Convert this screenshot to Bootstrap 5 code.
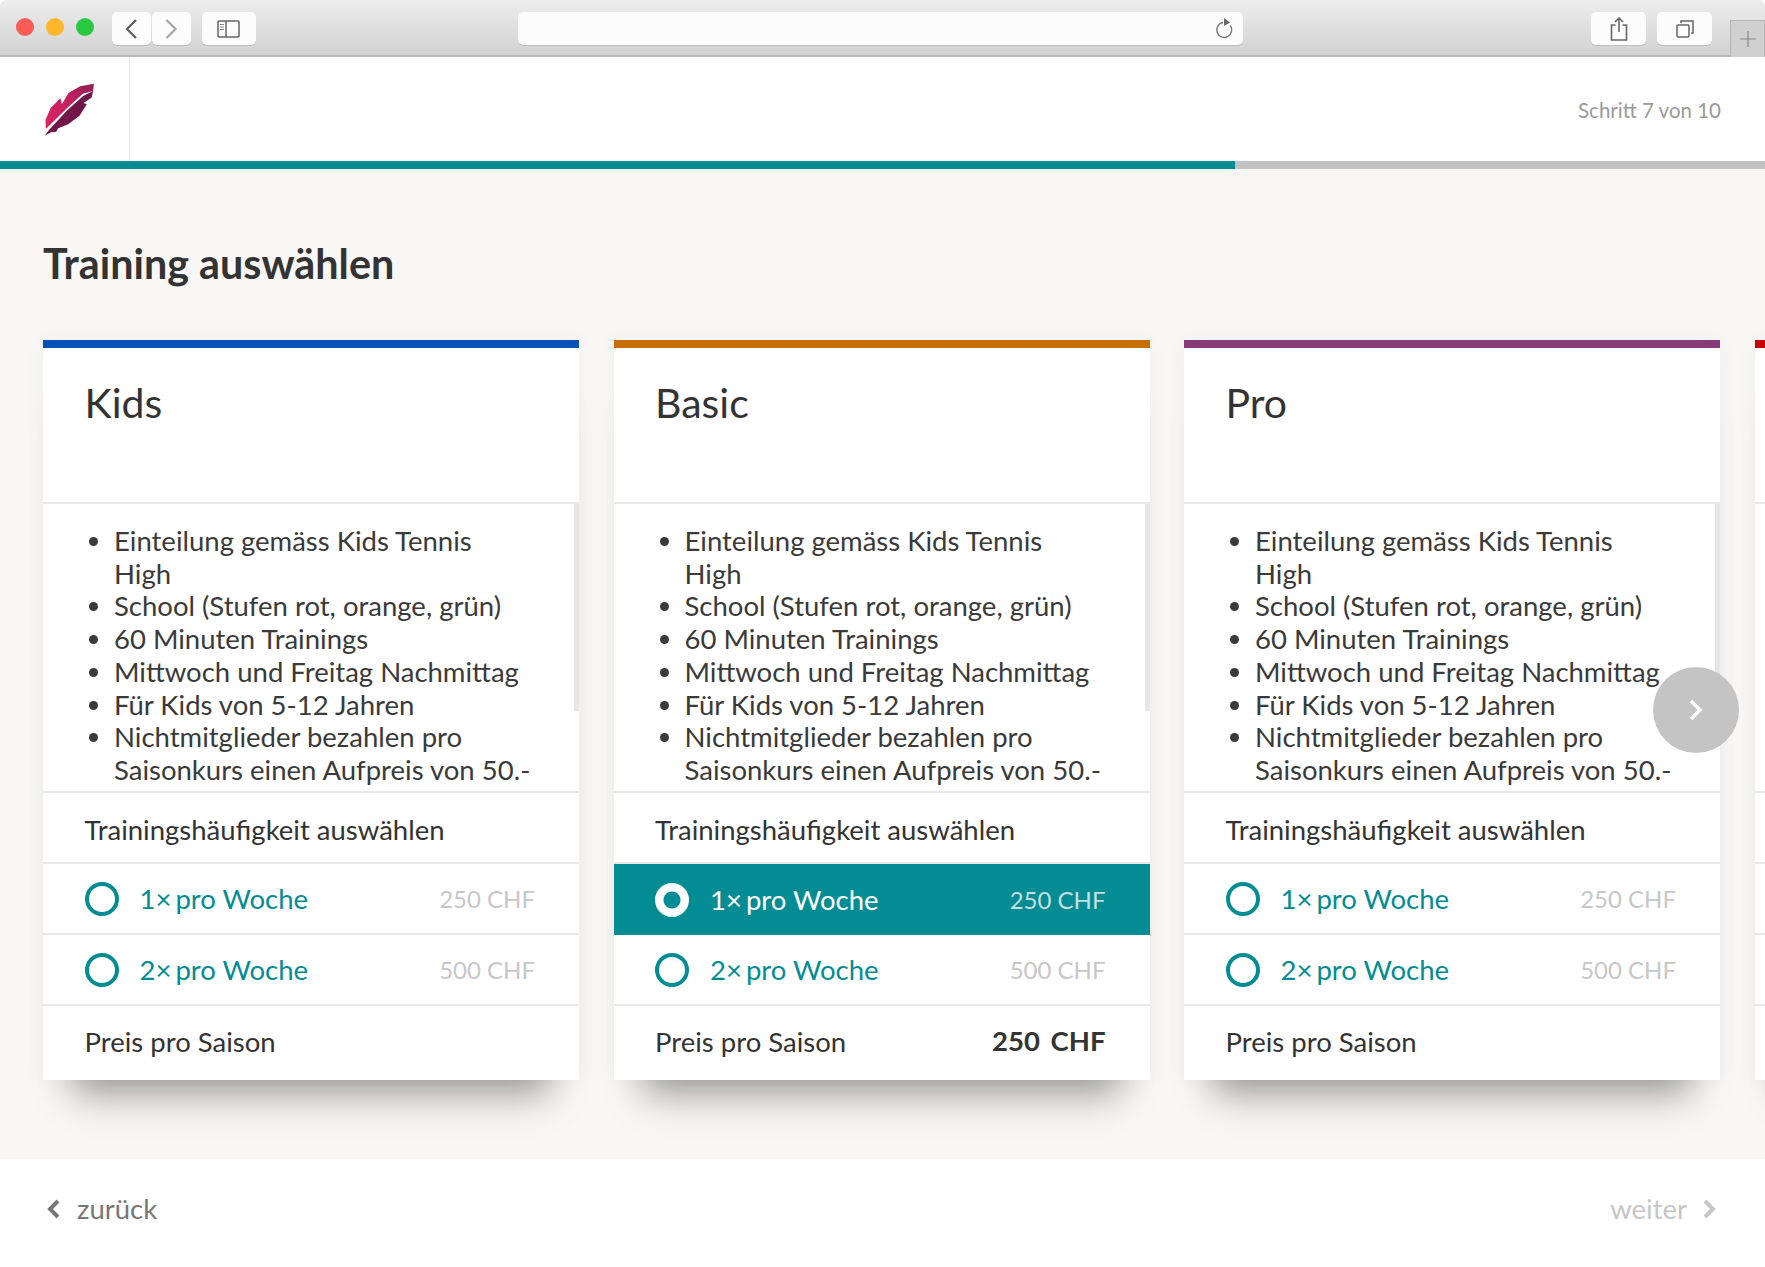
<!DOCTYPE html>
<html lang="de">
<head>
<meta charset="utf-8">
<title>Training auswählen</title>
<link rel="stylesheet" href="https://cdn.jsdelivr.net/npm/bootstrap@5.3.0/dist/css/bootstrap.min.css">
<style>
html,body{height:1267px;overflow:hidden;background:#fff}
body{font-family:Lato,"Open Sans",sans-serif;color:#333}
.browser-bar{height:57px;background:linear-gradient(#ededed,#d2d2d2);border-bottom:2px solid #b9b9b9;border-radius:6px 6px 0 0;padding:12px 0 0 16px;position:relative}
.light{width:18px;height:18px;border-radius:50%;margin-top:6px;margin-right:12px}
.light-r{background:#fc5b57}.light-y{background:#fdb82c}.light-g{background:#2ac840;margin-right:18px}
.tool{height:33px;background:#fcfcfc;border-radius:5px;box-shadow:0 1px 0 #bdbdbd;display:flex;align-items:center;justify-content:center}
.tool-nav{width:39px;margin-right:1px}
.tool-side{width:54px;margin-left:10px}
.tool-addr{width:726px;margin-left:262px;justify-content:flex-end;padding-right:8px}
.tool-share{width:55px;margin-left:348px}
.tool-tabs{width:55px;margin-left:11px}
.new-tab{width:35px;height:37px;margin-left:18px;margin-top:8px;background:#d0d0d0;border:1px solid #b5b5b5;border-bottom:0;display:flex;align-items:center;justify-content:center}
.app-head{height:104px;background:#fff}
.logo-cell{width:130px;border-right:1px solid #ececec;padding-left:9px}
.step-text{font-size:20.5px;color:#9a9a9a;padding:2px 44px 0 0}
.prog-track{height:8px;background:#c3c3c3}
.prog-fill{width:1235px;height:8px;background:#038c93}
.page-main{height:990px;background:#f8f7f6;padding:0 0 0 43px;overflow:hidden;position:relative}
.page-title{font-size:41.3px;font-weight:700;color:#333;margin:0;padding-top:70px;height:171px;line-height:48px}
.plans{gap:34.5px}
.plan{width:536px;flex:0 0 536px;border:0;border-radius:0;background:#fff;box-shadow:0 0 20px rgba(0,0,0,.035),0 44px 36px -30px rgba(0,0,0,.38)}
.plan-blue{border-top:8px solid #0650b8}
.plan-orange{border-top:8px solid #c46f08}
.plan-purple{border-top:8px solid #843d78}
.plan-red{border-top:8px solid #c90000}
.plan-name{height:156px;padding:31px 42px 0 41.500px;font-size:41px;font-weight:400;line-height:48px;border-bottom:2px solid #e8e8e8;margin:0;color:#333}
.plan-desc{height:289px;border-bottom:2px solid #e8e8e8;overflow:hidden}
.plan-desc ul{margin:0;padding:21px 8px 0 71px;font-size:27.500px;line-height:32.700px;flex:1;color:#3a3a3a}
.scroll-thumb{width:5px;height:207px;background:#e6e6e6;flex:none}
.row-freq,.row-opt,.row-total{padding:0 44px 0 41.500px;font-size:27.500px}
.row-freq{height:71px;border-bottom:2px solid #e8e8e8;color:#333;padding-top:4px}
.row-opt{height:71px;color:#038c93;gap:21px;border-bottom:2px solid #e8e8e8;margin:0}
.row-opt-on{background:#038c93;color:#fff;border-bottom:0}
.row-opt-on .opt-price{color:#c6dfe0}
.opt-price{font-size:24px;color:#c7c7c7}
.opt-x{margin-right:-3px}
.row-total{height:74px;color:#333;padding-bottom:2px}
.total-sum{font-size:27.500px;font-weight:700;word-spacing:4px;line-height:1;margin-top:-2px}
.opt-radio.form-check-input{width:34px;height:34px;margin:0;flex:none;background:#fff;border:4px solid #038c93;box-shadow:none}
.opt-radio.form-check-input:checked{background:#fff;background-image:radial-gradient(circle,#038c93 0 8px,#fff 9px);border-color:#fff}
.carousel-next{position:absolute;left:1653px;top:498px;width:86px;height:86px;border-radius:50%;background:#c4c4c4;display:flex;align-items:center;justify-content:center}
.app-foot{height:108px;background:#fff;padding:0 48px 8px 46px;font-size:27.500px}
.foot-back{color:#777;gap:17px}
.foot-next{color:#c6c6c6;gap:16px}
</style>
</head>
<body>
<div class="browser-bar d-flex align-items-start">
  <span class="light light-r"></span><span class="light light-y"></span><span class="light light-g"></span>
  <div class="tool tool-nav"><svg width="14" height="22" viewBox="0 0 14 22"><path d="M12 2 3 11l9 9" fill="none" stroke="#5c5c5c" stroke-width="2.200"/></svg></div>
  <div class="tool tool-nav"><svg width="14" height="22" viewBox="0 0 14 22"><path d="M2.500 2l9 9-9 9" fill="none" stroke="#a6a6a6" stroke-width="2.200"/></svg></div>
  <div class="tool tool-side"><svg width="23" height="18" viewBox="0 0 23 18"><rect x="1" y="1" width="21" height="16" rx="1" fill="none" stroke="#666" stroke-width="1.500"/><path d="M9 1v16" stroke="#666" stroke-width="1.500"/><path d="M3 4.500h4M3 7h4M3 9.500h4" stroke="#888"/></svg></div>
  <div class="tool tool-addr"><svg width="20" height="23" viewBox="0 0 20 23"><path d="M8 5.500a7.500 7.500 0 1 0 7.300 3" fill="none" stroke="#777" stroke-width="1.400"/><path d="M9 1l6 4.500-6 3.500z" fill="#666"/></svg></div>
  <div class="tool tool-share"><svg width="18" height="24" viewBox="0 0 18 24"><path d="M5.500 8H1.500v15h15V8h-4M9 15V1.500M5 5l4-4 4 4" fill="none" stroke="#666" stroke-width="1.600"/></svg></div>
  <div class="tool tool-tabs"><svg width="18" height="18" viewBox="0 0 18 18"><rect x="1" y="5" width="12" height="12" rx="1" fill="none" stroke="#666" stroke-width="1.500"/><path d="M5 3V1h12v12h-2" fill="none" stroke="#666" stroke-width="1.500"/></svg></div>
  <div class="new-tab"><svg width="16" height="16" viewBox="0 0 16 16"><path d="M8 0v16M0 8h16" stroke="#8b8b8b" stroke-width="1.200"/></svg></div>
</div>

<header class="app-head d-flex align-items-stretch justify-content-between">
  <div class="logo-cell d-flex align-items-center justify-content-center">
    <svg width="51" height="55" viewBox="130 245 152 165" aria-label="Logo">
      <defs><linearGradient id="fg" x1="0" y1="1" x2="1" y2="0"><stop offset="0" stop-color="#dd2663"/><stop offset=".55" stop-color="#c4205f"/><stop offset="1" stop-color="#8f1f52"/></linearGradient></defs>
      <path d="M135 386 134 358 150 322 179 294 183 312 203 278 238 258 279 250 277 272 246 280 196 326Z" fill="url(#fg)"/>
      <path d="M277 272 272 292 248 308 258 312 236 346 202 372 172 384 166 394 150 396 132 406 145 388 199 330 248 286Z" fill="#711649"/>
    </svg>
  </div>
  <div class="step-text d-flex align-items-center">Schritt 7 von 10</div>
</header>
<div class="prog-track"><div class="prog-fill"></div></div>

<main class="page-main">
  <h1 class="page-title">Training auswählen</h1>
  <div class="plans d-flex align-items-start">

    <section class="card plan plan-blue">
      <h2 class="plan-name">Kids</h2>
      <div class="plan-desc d-flex align-items-start"><ul><li>Einteilung gemäss Kids Tennis<br>High</li><li>School (Stufen rot, orange, grün)</li><li>60 Minuten Trainings</li><li>Mittwoch und Freitag Nachmittag</li><li>Für Kids von 5-12 Jahren</li><li>Nichtmitglieder bezahlen pro Saisonkurs einen Aufpreis von 50.-</li></ul><div class="scroll-thumb"></div></div>
      <div class="row-freq d-flex align-items-center">Trainingshäufigkeit auswählen</div>
      <label class="row-opt d-flex align-items-center"><input class="form-check-input opt-radio" type="radio" name="kids"><span class="flex-grow-1">1<span class="opt-x">×</span> pro Woche</span><span class="opt-price">250 CHF</span></label>
      <label class="row-opt d-flex align-items-center"><input class="form-check-input opt-radio" type="radio" name="kids"><span class="flex-grow-1">2<span class="opt-x">×</span> pro Woche</span><span class="opt-price">500 CHF</span></label>
      <div class="row-total d-flex align-items-center justify-content-between"><span>Preis pro Saison</span></div>
    </section>

    <section class="card plan plan-orange">
      <h2 class="plan-name">Basic</h2>
      <div class="plan-desc d-flex align-items-start"><ul><li>Einteilung gemäss Kids Tennis<br>High</li><li>School (Stufen rot, orange, grün)</li><li>60 Minuten Trainings</li><li>Mittwoch und Freitag Nachmittag</li><li>Für Kids von 5-12 Jahren</li><li>Nichtmitglieder bezahlen pro Saisonkurs einen Aufpreis von 50.-</li></ul><div class="scroll-thumb"></div></div>
      <div class="row-freq d-flex align-items-center">Trainingshäufigkeit auswählen</div>
      <label class="row-opt row-opt-on d-flex align-items-center"><input class="form-check-input opt-radio" type="radio" name="basic" checked><span class="flex-grow-1">1<span class="opt-x">×</span> pro Woche</span><span class="opt-price">250 CHF</span></label>
      <label class="row-opt d-flex align-items-center"><input class="form-check-input opt-radio" type="radio" name="basic"><span class="flex-grow-1">2<span class="opt-x">×</span> pro Woche</span><span class="opt-price">500 CHF</span></label>
      <div class="row-total d-flex align-items-center justify-content-between"><span>Preis pro Saison</span><span class="total-sum">250 CHF</span></div>
    </section>

    <section class="card plan plan-purple">
      <h2 class="plan-name">Pro</h2>
      <div class="plan-desc d-flex align-items-start"><ul><li>Einteilung gemäss Kids Tennis<br>High</li><li>School (Stufen rot, orange, grün)</li><li>60 Minuten Trainings</li><li>Mittwoch und Freitag Nachmittag</li><li>Für Kids von 5-12 Jahren</li><li>Nichtmitglieder bezahlen pro Saisonkurs einen Aufpreis von 50.-</li></ul><div class="scroll-thumb"></div></div>
      <div class="row-freq d-flex align-items-center">Trainingshäufigkeit auswählen</div>
      <label class="row-opt d-flex align-items-center"><input class="form-check-input opt-radio" type="radio" name="pro"><span class="flex-grow-1">1<span class="opt-x">×</span> pro Woche</span><span class="opt-price">250 CHF</span></label>
      <label class="row-opt d-flex align-items-center"><input class="form-check-input opt-radio" type="radio" name="pro"><span class="flex-grow-1">2<span class="opt-x">×</span> pro Woche</span><span class="opt-price">500 CHF</span></label>
      <div class="row-total d-flex align-items-center justify-content-between"><span>Preis pro Saison</span></div>
    </section>

    <section class="card plan plan-red">
      <h2 class="plan-name">&nbsp;</h2>
      <div class="plan-desc d-flex align-items-start"></div>
      <div class="row-freq d-flex align-items-center"></div>
      <div class="row-opt d-flex align-items-center"></div>
      <div class="row-opt d-flex align-items-center"></div>
      <div class="row-total d-flex align-items-center"></div>
    </section>
  </div>
  <div class="carousel-next"><svg width="16" height="24" viewBox="0 0 16 24"><path d="M3 3l9 9-9 9" fill="none" stroke="#fff" stroke-width="3.500"/></svg></div>
</main>

<footer class="app-foot d-flex align-items-center justify-content-between">
  <div class="foot-back d-flex align-items-center"><svg width="14" height="22" viewBox="0 0 14 22"><path d="M12 3 4 11l8 8" fill="none" stroke="#777" stroke-width="4"/></svg><span>zurück</span></div>
  <div class="foot-next d-flex align-items-center"><span>weiter</span><svg width="14" height="22" viewBox="0 0 14 22"><path d="M2 3l8 8-8 8" fill="none" stroke="#c6c6c6" stroke-width="4"/></svg></div>
</footer>
<script src="https://cdn.jsdelivr.net/npm/bootstrap@5.3.0/dist/js/bootstrap.bundle.min.js"></script>
</body>
</html>
